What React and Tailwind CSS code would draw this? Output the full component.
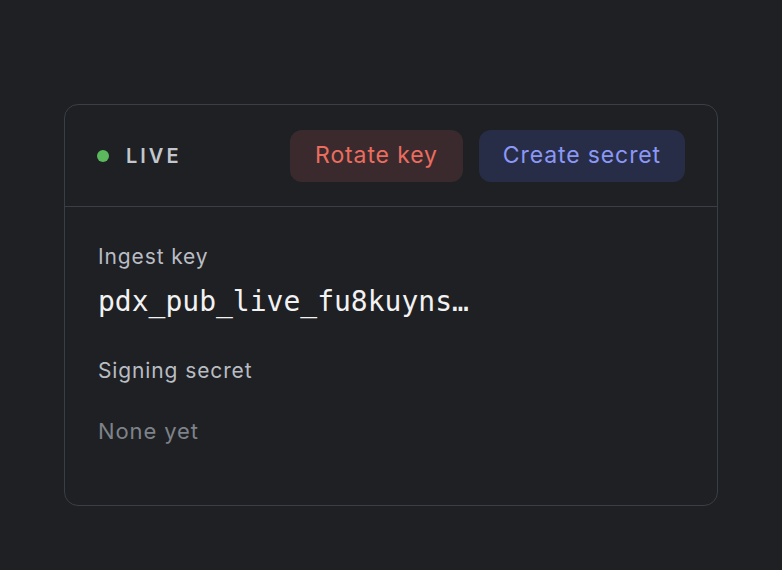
import React from "react";

export default function App() {
  return (
    <div
      className="min-h-screen w-full bg-[#1e2024] pt-[104px] pl-[64px]"
      style={{ fontFamily: "Inter, 'Noto Sans', sans-serif" }}
    >
      <div className="w-[654px] h-[402px] rounded-[14px] border border-[#3b3e44] bg-[#1e2024]">
        {/* header */}
        <div className="flex items-center justify-between h-[102px] px-[32px] border-b border-[#3b3e44]">
          <div className="flex items-center gap-[17px]">
            <span className="w-[12px] h-[12px] rounded-full bg-[#5cb85c]" />
            <span className="text-[20px] font-semibold tracking-[0.15em] text-[#c3c7cd]">LIVE</span>
          </div>
          <div className="flex items-center gap-[16px] tracking-[0.055em]">
            <button className="h-[52px] px-[25px] rounded-[12px] bg-[#3b2a2d] text-[#ea6d5f] text-[23px]">
              Rotate key
            </button>
            <button className="h-[52px] px-[24px] rounded-[12px] bg-[#282d47] text-[#8b98f7] text-[23px]">
              Create secret
            </button>
          </div>
        </div>
        {/* body */}
        <div className="px-[33px] pt-[36px] tracking-[0.055em]">
          <div className="text-[21px] text-[#b9bdc3] leading-[28px]">Ingest key</div>
          <div
            className="mt-[15px] text-[28px] text-[#f2f2f2] leading-[32px] tracking-normal"
            style={{ fontFamily: "'DejaVu Sans Mono', monospace" }}
          >
            pdx_pub_live_fu8kuyns…
          </div>
          <div className="mt-[39px] text-[21px] text-[#b9bdc3] leading-[28px]">Signing secret</div>
          <div className="mt-[32px] text-[22px] text-[#7e8289] leading-[28px]">None yet</div>
        </div>
      </div>
    </div>
  );
}
